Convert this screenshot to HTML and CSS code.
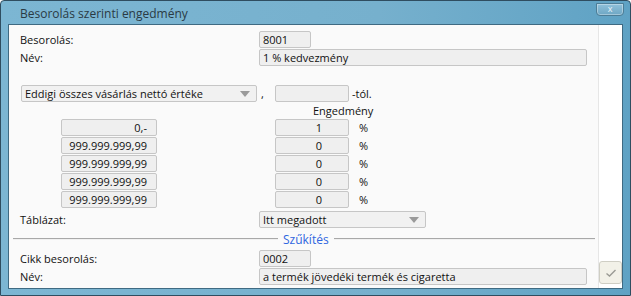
FILE: index.html
```html
<!DOCTYPE html>
<html lang="hu">
<head>
    <meta charset="UTF-8">
    <title>Besorolás szerinti engedmény</title>
    <link rel="stylesheet" href="styles.css">
</head>
<body>
    <div class="window">
        <div class="titlebar">
            <span class="title">Besorolás szerinti engedmény</span>
            <span class="close">x</span>
        </div>
        <div class="client">
            <div class="panel">
                <div class="row">
                    <span class="label">Besorolás:</span>
                    <span class="field code">8001</span>
                </div>
                <div class="row">
                    <span class="label">Név:</span>
                    <span class="field wide">1 % kedvezmény</span>
                </div>

                <div class="row basis">
                    <span class="select basis-select">Eddigi összes vásárlás nettó értéke<i class="arrow"></i></span>
                    <span class="comma">,</span>
                    <span class="field amount"></span>
                    <span class="suffix">-tól.</span>
                </div>
                <div class="row head">
                    <span class="head-label">Engedmény</span>
                </div>
                <div class="tiers">
                    <div class="tier">
                        <span class="field limit">0,-</span>
                        <span class="field amount pct">1</span>
                        <span class="unit">%</span>
                    </div>
                    <div class="tier">
                        <span class="field limit">999.999.999,99</span>
                        <span class="field amount pct">0</span>
                        <span class="unit">%</span>
                    </div>
                    <div class="tier">
                        <span class="field limit">999.999.999,99</span>
                        <span class="field amount pct">0</span>
                        <span class="unit">%</span>
                    </div>
                    <div class="tier">
                        <span class="field limit">999.999.999,99</span>
                        <span class="field amount pct">0</span>
                        <span class="unit">%</span>
                    </div>
                    <div class="tier">
                        <span class="field limit">999.999.999,99</span>
                        <span class="field amount pct">0</span>
                        <span class="unit">%</span>
                    </div>
                </div>
                <div class="row table-row">
                    <span class="label">Táblázat:</span>
                    <span class="select table-select">Itt megadott<i class="arrow"></i></span>
                </div>

                <div class="divider">
                    <span class="line left"></span>
                    <span class="divider-text">Szűkítés</span>
                    <span class="line"></span>
                </div>

                <div class="row">
                    <span class="label">Cikk besorolás:</span>
                    <span class="field code">0002</span>
                </div>
                <div class="row">
                    <span class="label">Név:</span>
                    <span class="field wide">a termék jövedéki termék és cigaretta</span>
                </div>
            </div>
            <div class="side">
                <button class="ok">
                    <svg width="12" height="10" viewBox="0 0 12 10"><path d="M1.5 5.5 L4.5 8 L10.5 2" fill="none" stroke="#9a9a94" stroke-width="1.4"/></svg>
                </button>
            </div>
        </div>
    </div>
</body>
</html>
```

FILE: styles.css
```css
* {
    margin: 0;
    padding: 0;
    box-sizing: border-box;
}

body {
    font-family: 'Open Sans', 'Noto Sans', sans-serif;
    font-size: 11px;
    color: #111111;
    background: #ffffff;
}

.window {
    width: 631px;
    height: 296px;
    display: flex;
    flex-direction: column;
    background: linear-gradient(90deg, #7cb6d3, #76b0cd 60%, #5fa2c4);
    border: 1px solid #2f4d60;
    border-radius: 4px 4px 0 0;
    padding: 0 7px 6px 7px;
}

.titlebar {
    height: 23px;
    display: flex;
    align-items: center;
    justify-content: space-between;
}

.title {
    font-size: 12px;
    color: #2a3a44;
    padding-left: 12px;
    padding-top: 2px;
}

.close {
    width: 28px;
    height: 13px;
    margin-top: -7px;
    margin-right: -1px;
    border: 1px solid #4d7d96;
    border-radius: 0 0 4px 4px;
    background: linear-gradient(#8fc0da, #6ea7c4);
    box-shadow: inset 0 0 0 1px rgba(255, 255, 255, 0.35);
    color: #eaf4fa;
    font-size: 9px;
    line-height: 9px;
    text-align: center;
}

.client {
    flex: 1;
    display: flex;
    background: #ffffff;
    border: 1px solid #3f6a82;
}

.panel {
    width: 590px;
    background: #fafafa;
    border-right: 1px solid #e6e6e6;
    padding: 5px 0 0 11px;
    display: flex;
    flex-direction: column;
}

.side {
    flex: 1;
    display: flex;
    align-items: flex-end;
    justify-content: center;
    padding-bottom: 4px;
}

.row {
    display: flex;
    align-items: center;
    height: 18px;
}

.label {
    width: 239px;
}

.field {
    height: 17px;
    line-height: 15px;
    padding: 0 3px;
    background: #efefef;
    border: 1px solid #c6c6c6;
    border-radius: 2px;
    white-space: nowrap;
    overflow: hidden;
}

.code {
    width: 52px;
}

.wide {
    width: 328px;
}

.basis {
    margin-top: 18px;
}

.select {
    position: relative;
    height: 17px;
    line-height: 15px;
    padding: 0 3px;
    background: #f1f1f1;
    border: 1px solid #c6c6c6;
    border-radius: 2px;
}

.basis-select {
    width: 236px;
    margin-left: 1px;
}

.arrow {
    position: absolute;
    right: 6px;
    top: 5px;
    width: 0;
    height: 0;
    border-left: 5px solid transparent;
    border-right: 5px solid transparent;
    border-top: 6px solid #9a9a9a;
}

.comma {
    width: 18px;
    padding-left: 4px;
}

.amount {
    width: 74px;
}

.suffix {
    padding-left: 3px;
}

.head {
    height: 17px;
}

.head-label {
    margin-left: 293px;
}

.tiers {
    display: flex;
    flex-direction: column;
    gap: 1px;
}

.tier {
    display: flex;
    align-items: center;
    height: 17px;
}

.limit {
    width: 96px;
    margin-left: 41px;
    margin-right: 118px;
    text-align: right;
    padding-right: 9px;
}

.pct {
    text-align: center;
    padding: 0 0 0 14px;
}

.unit {
    padding-left: 10px;
}

.table-row {
    margin-top: 2px;
}

.table-select {
    width: 167px;
}

.divider {
    display: flex;
    align-items: center;
    height: 20px;
    margin-left: -7px;
    margin-right: 3px;
    margin-top: 1px;
}

.line {
    flex: 1;
    height: 2px;
    border-top: 1px solid #a8a8a8;
    border-bottom: 1px solid #f0f0f0;
}

.line.left {
    flex: 0 0 265px;
}

.divider-text {
    color: #2f66e0;
    font-size: 12px;
    padding: 0 5px;
}

.ok {
    width: 23px;
    height: 23px;
    background: #f2f1e8;
    border: 1px solid #cfcec4;
    border-radius: 3px;
    display: flex;
    align-items: center;
    justify-content: center;
}
```
